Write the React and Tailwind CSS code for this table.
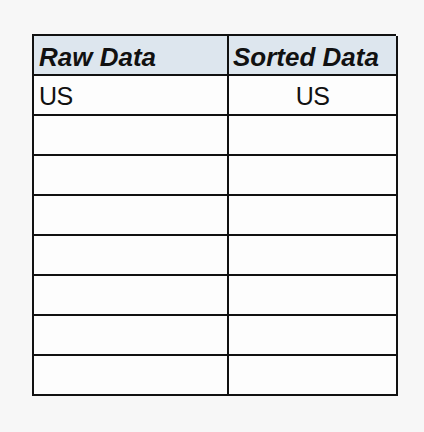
export default function App() {
  const rows = ["US", "", "", "", "", "", "", ""];
  return (
    <div className="w-[424px] h-[432px] bg-[#f7f7f7] pt-[34px] pl-[32px]" style={{ fontFamily: '"Liberation Sans", Arial, sans-serif' }}>
      <div className="grid grid-cols-[195px_169px] w-[364px] border-l-2 border-t-2 border-[#111]">
        <div className="h-[40px] bg-[#dde6ee] border-r-2 border-b-2 border-[#111] pl-[5px] pt-[3px] flex items-center text-[26px] font-bold italic text-[#111] leading-none">Raw Data</div>
        <div className="h-[40px] bg-[#dde6ee] border-r-2 border-b-2 border-[#111] pl-[4px] pt-[3px] flex items-center text-[26px] font-bold italic text-[#111] leading-none">Sorted Data</div>
        {rows.map((r, i) => (
          <>
            <div key={"a" + i} className="h-[40px] bg-[#fdfdfd] border-r-2 border-b-2 border-[#111] pl-[5px] pt-[2px] flex items-center text-[25px] text-[#111] leading-none tracking-[-0.5px]">{r}</div>
            <div key={"b" + i} className="h-[40px] bg-[#fdfdfd] border-r-2 border-b-2 border-[#111] pt-[2px] flex items-center justify-center text-[25px] text-[#111] leading-none tracking-[-0.5px]">{r}</div>
          </>
        ))}
      </div>
    </div>
  );
}
